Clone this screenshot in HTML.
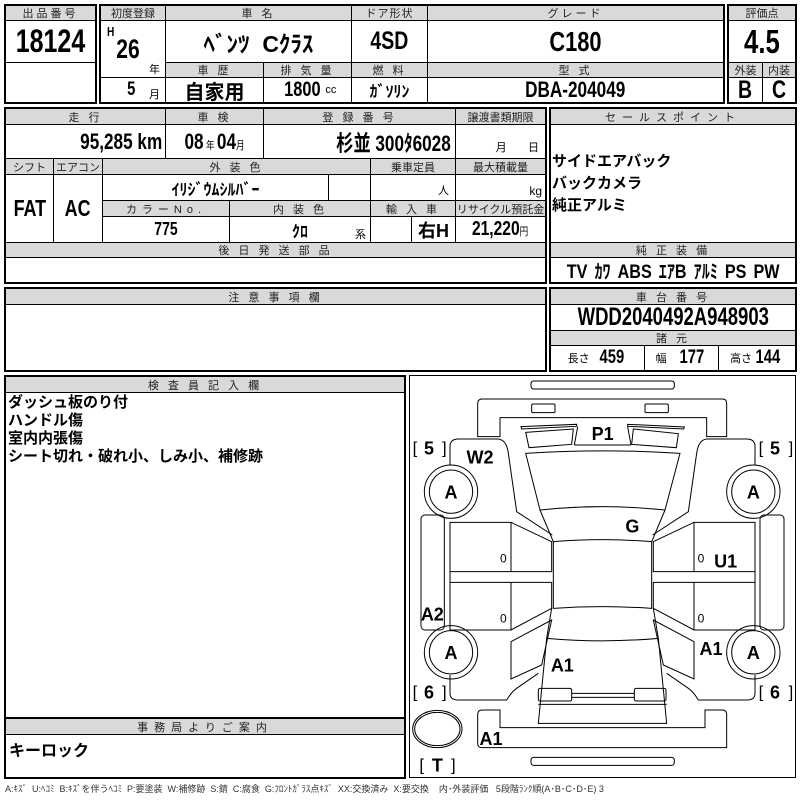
<!DOCTYPE html>
<html><head><meta charset="utf-8"><style>
body{margin:0;width:800px;height:800px;background:#fff;position:relative;overflow:hidden;font-family:"Liberation Sans","Noto Sans CJK JP",sans-serif;color:#000}
.c{position:absolute;border:1px solid #000;box-sizing:border-box;display:flex;align-items:center;justify-content:center;white-space:nowrap;overflow:hidden}
.h{background:#d9d9d9;font-size:11px;letter-spacing:3px;color:#222}
.o{position:absolute;border:2px solid #000;box-sizing:border-box}
.b{font-family:"Liberation Sans","Noto Sans CJK JP",sans-serif;font-weight:bold}
.n{display:inline-block;transform:scaleX(.78)}
.r{transform-origin:right center}
.t{position:absolute;white-space:nowrap}
.s{font-size:11px;font-weight:normal;font-family:"Liberation Sans","Noto Sans CJK JP",sans-serif}
</style></head><body>
<!-- block1 -->
<div class="c h" style="left:5px;top:5px;width:91px;height:16px">出品番号</div>
<div class="c b" style="left:5px;top:20px;width:91px;height:43px;font-size:32px"><span class="n">18124</span></div>
<div class="c" style="left:5px;top:62px;width:91px;height:41px"></div>
<div class="o" style="left:4px;top:4px;width:93px;height:100px"></div>
<!-- block2 -->
<div class="c h" style="left:100px;top:5px;width:66px;height:16px;letter-spacing:0">初度登録</div>
<div class="c h" style="left:165px;top:5px;width:187px;height:16px">車 名</div>
<div class="c h" style="left:351px;top:5px;width:77px;height:16px;letter-spacing:1px">ドア形状</div>
<div class="c h" style="left:427px;top:5px;width:297px;height:16px">グレード</div>
<div class="c" style="left:100px;top:20px;width:66px;height:58px"></div>
<div class="t b" style="left:106px;top:24px;font-size:13px"><span class="n">H</span></div>
<div class="t b" style="left:113px;top:34px;font-size:27px"><span class="n">26</span></div>
<div class="t" style="left:149px;top:61px;font-size:11px">年</div>
<div class="c" style="left:100px;top:77px;width:66px;height:26px"></div>
<div class="t b" style="left:126px;top:79px;font-size:19px"><span class="n">5</span></div>
<div class="t" style="left:149px;top:86px;font-size:11px">月</div>
<div class="c b" style="left:165px;top:20px;width:187px;height:43px;font-size:23px">ﾍﾞﾝﾂ&nbsp;&nbsp;Cｸﾗｽ</div>
<div class="c b" style="left:351px;top:20px;width:77px;height:43px;font-size:25px"><span class="n">4SD</span></div>
<div class="c b" style="left:427px;top:20px;width:297px;height:43px;font-size:28px"><span class="n">C180</span></div>
<div class="c h" style="left:165px;top:62px;width:99px;height:16px">車 歴</div>
<div class="c h" style="left:263px;top:62px;width:89px;height:16px">排 気 量</div>
<div class="c h" style="left:351px;top:62px;width:77px;height:16px">燃 料</div>
<div class="c h" style="left:427px;top:62px;width:297px;height:16px">型 式</div>
<div class="c" style="left:165px;top:77px;width:99px;height:26px;font-size:20px;font-weight:bold">自家用</div>
<div class="c b" style="left:263px;top:77px;width:89px;height:26px;font-size:21px"><span class="n">1800</span><span class="s">cc</span></div>
<div class="c b" style="left:351px;top:77px;width:77px;height:26px;font-size:16px">ｶﾞｿﾘﾝ</div>
<div class="c b" style="left:427px;top:77px;width:297px;height:26px;font-size:22px"><span class="n">DBA-204049</span></div>
<div class="o" style="left:99px;top:4px;width:626px;height:100px"></div>
<!-- block3 -->
<div class="c h" style="left:728px;top:5px;width:68px;height:16px;letter-spacing:0">評価点</div>
<div class="c b" style="left:728px;top:20px;width:68px;height:43px;font-size:33px"><span class="n">4.5</span></div>
<div class="c h" style="left:728px;top:62px;width:35px;height:16px;letter-spacing:0">外装</div>
<div class="c h" style="left:762px;top:62px;width:34px;height:16px;letter-spacing:0">内装</div>
<div class="c b" style="left:728px;top:77px;width:35px;height:26px;font-size:25px"><span class="n">B</span></div>
<div class="c b" style="left:762px;top:77px;width:34px;height:26px;font-size:25px"><span class="n">C</span></div>
<div class="o" style="left:727px;top:4px;width:70px;height:100px"></div>
<!-- block4 -->
<div class="c h" style="left:5px;top:108px;width:161px;height:17px">走 行</div>
<div class="c h" style="left:165px;top:108px;width:99px;height:17px">車 検</div>
<div class="c h" style="left:263px;top:108px;width:193px;height:17px">登 録 番 号</div>
<div class="c h" style="left:455px;top:108px;width:91px;height:17px;letter-spacing:0">譲渡書類期限</div>
<div class="c b" style="left:5px;top:124px;width:161px;height:35px;font-size:22px;justify-content:flex-end;padding-right:3px"><span class="n r">95,285 km</span></div>
<div class="c b" style="left:165px;top:124px;width:99px;height:35px;font-size:22px"><span class="n">08<span class="s">&nbsp;年&nbsp;</span>04<span class="s">月</span></span></div>
<div class="c b" style="left:263px;top:124px;width:193px;height:35px;font-size:22px;justify-content:flex-end;padding-right:4px"><span class="n r">杉並 300ﾀ6028</span></div>
<div class="c" style="left:455px;top:124px;width:91px;height:35px;font-size:11px;align-items:flex-end;padding-bottom:3px;justify-content:flex-end;padding-right:6px">月&nbsp;&nbsp;&nbsp;&nbsp;&nbsp;&nbsp;&nbsp;日</div>
<div class="c h" style="left:5px;top:158px;width:49px;height:17px;letter-spacing:0">シフト</div>
<div class="c h" style="left:53px;top:158px;width:50px;height:17px;letter-spacing:0">エアコン</div>
<div class="c h" style="left:102px;top:158px;width:269px;height:17px">外 装 色</div>
<div class="c h" style="left:370px;top:158px;width:86px;height:17px;letter-spacing:0">乗車定員</div>
<div class="c h" style="left:455px;top:158px;width:91px;height:17px;letter-spacing:0">最大積載量</div>
<div class="c b" style="left:5px;top:174px;width:49px;height:69px;font-size:23px"><span class="n">FAT</span></div>
<div class="c b" style="left:53px;top:174px;width:50px;height:69px;font-size:23px"><span class="n">AC</span></div>
<div class="c b" style="left:102px;top:174px;width:227px;height:27px;font-size:16px">ｲﾘｼﾞｳﾑｼﾙﾊﾞｰ</div>
<div class="c" style="left:328px;top:174px;width:43px;height:27px"></div>
<div class="c" style="left:370px;top:174px;width:86px;height:27px;font-size:11px;justify-content:flex-end;align-items:flex-end;padding:0 6px 2px 0">人</div>
<div class="c" style="left:455px;top:174px;width:91px;height:27px;font-size:12px;justify-content:flex-end;align-items:flex-end;padding:0 3px 2px 0">kg</div>
<div class="c h" style="left:102px;top:200px;width:128px;height:17px;letter-spacing:5px">カラーNo.</div>
<div class="c h" style="left:229px;top:200px;width:142px;height:17px">内 装 色</div>
<div class="c h" style="left:370px;top:200px;width:86px;height:17px">輸 入 車</div>
<div class="c h" style="left:455px;top:200px;width:91px;height:17px;letter-spacing:0">リサイクル預託金</div>
<div class="c b" style="left:102px;top:216px;width:128px;height:27px;font-size:18px"><span class="n">775</span></div>
<div class="c b" style="left:229px;top:216px;width:142px;height:27px;font-size:16px">ｸﾛ</div>
<div class="t" style="left:355px;top:226px;font-size:11px">系</div>
<div class="c" style="left:370px;top:216px;width:42px;height:27px"></div>
<div class="c" style="left:411px;top:216px;width:45px;height:27px;font-size:18px;font-weight:bold">右H</div>
<div class="c b" style="left:455px;top:216px;width:91px;height:27px;font-size:20px"><span class="n">21,220<span class="s">円</span></span></div>
<div class="c h" style="left:5px;top:242px;width:541px;height:16px">後 日 発 送 部 品</div>
<div class="c" style="left:5px;top:257px;width:541px;height:26px"></div>
<div class="o" style="left:4px;top:107px;width:543px;height:177px"></div>
<!-- block5 -->
<div class="c h" style="left:550px;top:108px;width:246px;height:17px;letter-spacing:6px">セールスポイント</div>
<div class="c" style="left:550px;top:124px;width:246px;height:119px"></div>
<div class="t" style="left:552px;top:151px;font-size:15px;font-weight:bold;line-height:22px">サイドエアバック<br>バックカメラ<br>純正アルミ</div>
<div class="c h" style="left:550px;top:242px;width:246px;height:16px">純 正 装 備</div>
<div class="c b" style="left:550px;top:257px;width:246px;height:26px;font-size:19px;word-spacing:3px"><span class="n" style="transform:scaleX(.85)">TV ｶﾜ ABS ｴｱB ｱﾙﾐ PS PW</span></div>
<div class="o" style="left:549px;top:107px;width:248px;height:177px"></div>
<!-- block6 -->
<div class="c h" style="left:5px;top:288px;width:541px;height:17px">注 意 事 項 欄</div>
<div class="c" style="left:5px;top:304px;width:541px;height:67px"></div>
<div class="o" style="left:4px;top:287px;width:543px;height:85px"></div>
<!-- block7 -->
<div class="c h" style="left:550px;top:288px;width:246px;height:17px">車 台 番 号</div>
<div class="c b" style="left:550px;top:304px;width:246px;height:27px;font-size:25px;overflow:visible"><span class="n" style="transform:scaleX(.74)">WDD2040492A948903</span></div>
<div class="c h" style="left:550px;top:330px;width:246px;height:16px">諸 元</div>
<div class="c b" style="left:550px;top:345px;width:95px;height:26px;font-size:19px"><span class="s">長さ&nbsp;&nbsp;</span><span class="n">459</span></div>
<div class="c b" style="left:644px;top:345px;width:75px;height:26px;font-size:19px"><span class="s">幅&nbsp;&nbsp;&nbsp;</span><span class="n">177</span></div>
<div class="c b" style="left:718px;top:345px;width:78px;height:26px;font-size:19px"><span class="s">高さ</span><span class="n">144</span></div>
<div class="o" style="left:549px;top:287px;width:248px;height:85px"></div>
<!-- block8 -->
<div class="c h" style="left:5px;top:376px;width:400px;height:17px">検 査 員 記 入 欄</div>
<div class="c" style="left:5px;top:392px;width:400px;height:326px"></div>
<div class="t" style="left:8px;top:394px;font-size:15px;font-weight:bold;line-height:18px">ダッシュ板のり付<br>ハンドル傷<br>室内内張傷<br>シート切れ・破れ小、しみ小、補修跡</div>
<div class="c h" style="left:5px;top:718px;width:400px;height:17px;letter-spacing:6px">事務局よりご案内</div>
<div class="c" style="left:5px;top:734px;width:400px;height:44px"></div>
<div class="t" style="left:9px;top:737px;font-size:16px;font-weight:bold">キーロック</div>
<div class="o" style="left:4px;top:375px;width:402px;height:404px"></div>
<!-- diagram -->
<div class="o" style="left:409px;top:375px;width:387px;height:403px;border-width:1px"></div>
<svg style="position:absolute;left:405px;top:375px" width="395" height="425" viewBox="0 0 1185 1275">
<g fill="none" stroke="#000" stroke-width="3">
<rect x="378" y="18" width="430" height="24" rx="8"/>
<path d="M218,85 Q218,72 232,72 H952 Q965,72 965,85 V185 H905 V128 H285 V185 H218 Z"/>
<rect x="380" y="87" width="70" height="26" rx="4"/><rect x="720" y="87" width="70" height="26" rx="4"/>
<path d="M348,155 L515,148 L515,154 L350,162 Z"/><path d="M668,148 L838,156 L836,162 L668,154 Z"/>
<path d="M362,172 L505,162 L500,208 L372,218 Z"/><path d="M685,162 L820,176 L814,218 L680,208 Z"/>
<path d="M508,210 L518,155"/><path d="M678,210 L668,155"/><path d="M508,210 H678"/>
<path d="M362,235 Q593,220 825,235 L780,405 Q593,385 405,405 Z"/>
<path d="M405,405 L445,500 Q593,488 740,500 L780,405"/>
<path d="M445,500 V700 Q593,690 740,700 V500"/>
<path d="M440,700 L425,790 Q593,805 760,790 L745,700"/>
<path d="M425,790 L400,1045 H785 L760,790"/>
<rect x="400" y="940" width="100" height="38" rx="5"/><rect x="688" y="940" width="95" height="38" rx="5"/>
<path d="M500,955 H688 M500,967 H688 M400,988 H785"/>
<path d="M218,1018 Q218,1005 232,1005 H285 V1058 H900 V1005 H952 Q965,1005 965,1018 V1118 H232 Q218,1118 218,1105 Z"/>
<rect x="378" y="1147" width="430" height="24" rx="8"/>
<path d="M135,272 V215 Q135,192 160,192 H280 Q305,195 310,235 L335,410 L442,480"/>
<path d="M135,442 H318 L440,500 V590 H135 Z M318,442 V590"/>
<path d="M135,622 H440 V700 L318,765 H135 Z M318,622 V765"/>
<path d="M135,590 V622"/>
<path d="M318,800 L440,735 L410,870 L318,912 Z"/>
<path d="M135,900 V955 Q135,975 160,975 H305 Q320,950 335,940 L400,895"/>
<rect x="48" y="420" width="70" height="345" rx="12"/>
<path d="M1050,272 V215 Q1050,192 1025,192 H905 Q880,195 875,235 L850,410 L743,480"/>
<path d="M1050,442 H867 L745,500 V590 H1050 Z M867,442 V590"/>
<path d="M1050,622 H745 V700 L867,765 H1050 Z M867,622 V765"/>
<path d="M1050,590 V622"/>
<path d="M867,800 L745,735 L775,870 L867,912 Z"/>
<path d="M1050,900 V955 Q1050,975 1025,975 H880 Q865,950 850,940 L785,895"/>
<rect x="1065" y="420" width="72" height="345" rx="12"/>
<circle cx="138" cy="350" r="80"/><circle cx="138" cy="350" r="65"/>
<circle cx="138" cy="832" r="80"/><circle cx="138" cy="832" r="65"/>
<circle cx="1045" cy="350" r="80"/><circle cx="1045" cy="350" r="65"/>
<circle cx="1045" cy="832" r="80"/><circle cx="1045" cy="832" r="65"/>
<ellipse cx="97" cy="1062" rx="74" ry="56"/><ellipse cx="97" cy="1062" rx="68" ry="50"/>
</g>
<g font-family="Liberation Sans, sans-serif" font-weight="bold" font-size="54" text-anchor="middle">
<text x="138" y="370">A</text><text x="138" y="852">A</text><text x="1045" y="370">A</text><text x="1045" y="852">A</text>
<text x="593" y="195">P1</text><text x="225" y="265">W2</text><text x="682" y="472">G</text>
<text x="962" y="577">U1</text><text x="82" y="737">A2</text><text x="472" y="890">A1</text>
<text x="918" y="840">A1</text><text x="258" y="1110">A1</text>
<text x="72" y="238">5</text><text x="1110" y="238">5</text><text x="72" y="970">6</text><text x="1110" y="970">6</text>
<text x="97" y="1190">T</text>
</g>
<g font-family="Liberation Sans, sans-serif" font-size="50" text-anchor="middle">
<text x="30" y="235">[</text><text x="118" y="235">]</text><text x="1068" y="235">[</text><text x="1158" y="235">]</text>
<text x="30" y="967">[</text><text x="118" y="967">]</text><text x="1068" y="967">[</text><text x="1158" y="967">]</text>
<text x="50" y="1187">[</text><text x="145" y="1187">]</text>
</g>
<g font-family="Liberation Sans, sans-serif" font-size="36" text-anchor="middle">
<text x="295" y="562">0</text><text x="295" y="742">0</text><text x="888" y="562">0</text><text x="888" y="742">0</text>
</g>
</svg>
<div class="t" style="left:5px;top:782px;font-size:9px;color:#333">A:ｷｽﾞ&nbsp; U:ﾍｺﾐ&nbsp; B:ｷｽﾞを伴うﾍｺﾐ&nbsp; P:要塗装&nbsp; W:補修跡&nbsp; S:錆&nbsp; C:腐食&nbsp; G:ﾌﾛﾝﾄｶﾞﾗｽ点ｷｽﾞ&nbsp; XX:交換済み&nbsp; X:要交換&nbsp;&nbsp;&nbsp; 内･外装評価&nbsp;&nbsp; 5段階ﾗﾝｸ順(A･B･C･D･E) 3</div>
</body></html>
